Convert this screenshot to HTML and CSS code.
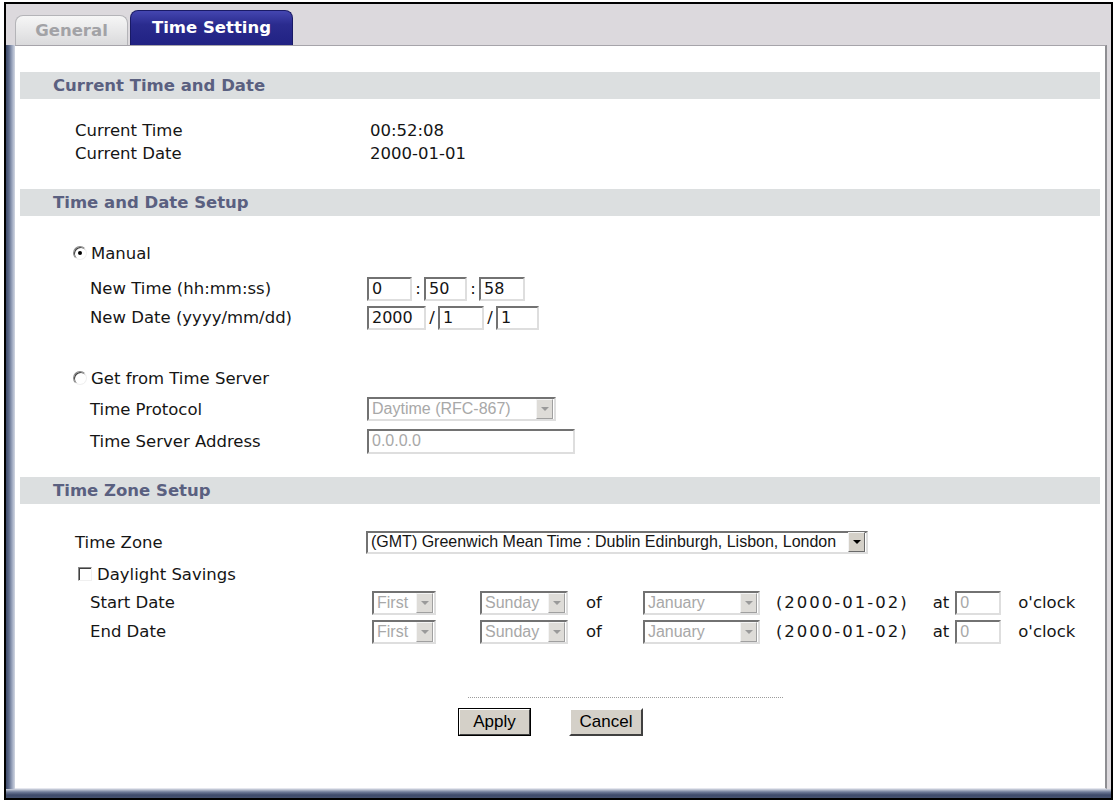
FILE: index.html
```html
<!DOCTYPE html>
<html lang="en">

<head>
    <meta charset="UTF-8">
    <title>Time Setting</title>
    <link rel="stylesheet" href="styles.css">
</head>

<body>
    <div class="window">
        <div class="tabs">
            <div class="tab">General</div>
            <div class="tab active">Time Setting</div>
        </div>
        <div class="frame">
            <div class="panel">

                <div class="sec-head">Current Time and Date</div>
                <div class="sec-body cur">
                    <div class="row"><span class="lbl">Current Time</span><span>00:52:08</span></div>
                    <div class="row"><span class="lbl">Current Date</span><span>2000-01-01</span></div>
                </div>

                <div class="sec-head">Time and Date Setup</div>
                <div class="sec-body setup">
                    <div class="row opt"><span class="radio on"></span><span>Manual</span></div>
                    <div class="row sub first-sub">
                        <span class="lbl">New Time (hh:mm:ss)</span>
                        <span class="txt w45">0</span><span class="sep">:</span>
                        <span class="txt w43">50</span><span class="sep">:</span>
                        <span class="txt w46">58</span>
                    </div>
                    <div class="row sub">
                        <span class="lbl">New Date (yyyy/mm/dd)</span>
                        <span class="txt w59">2000</span><span class="sep">/</span>
                        <span class="txt w46">1</span><span class="sep">/</span>
                        <span class="txt w43">1</span>
                    </div>
                    <div class="row opt server"><span class="radio"></span><span>Get from Time Server</span></div>
                    <div class="row sub tall">
                        <span class="lbl">Time Protocol</span>
                        <span class="sel off proto"><span class="val">Daytime (RFC-867)</span><span class="arr"></span></span>
                    </div>
                    <div class="row sub tall">
                        <span class="lbl">Time Server Address</span>
                        <span class="txt off addr">0.0.0.0</span>
                    </div>
                </div>

                <div class="sec-head">Time Zone Setup</div>
                <div class="sec-body zone">
                    <div class="row tz">
                        <span class="lbl">Time Zone</span>
                        <span class="sel gmt"><span class="val">(GMT) Greenwich Mean Time : Dublin Edinburgh, Lisbon, London</span><span class="arr"></span></span>
                    </div>
                    <div class="row dst"><span class="check"></span><span>Daylight Savings</span></div>
                    <div class="row day">
                        <span class="lbl">Start Date</span>
                        <span class="sel off s-week"><span class="val">First</span><span class="arr"></span></span>
                        <span class="sel off s-day"><span class="val">Sunday</span><span class="arr"></span></span>
                        <span class="word of">of</span>
                        <span class="sel off s-month"><span class="val">January</span><span class="arr"></span></span>
                        <span class="word stamp">(2000-01-02)</span>
                        <span class="word at">at</span>
                        <span class="txt off hour">0</span>
                        <span class="word">o'clock</span>
                    </div>
                    <div class="row day">
                        <span class="lbl">End Date</span>
                        <span class="sel off s-week"><span class="val">First</span><span class="arr"></span></span>
                        <span class="sel off s-day"><span class="val">Sunday</span><span class="arr"></span></span>
                        <span class="word of">of</span>
                        <span class="sel off s-month"><span class="val">January</span><span class="arr"></span></span>
                        <span class="word stamp">(2000-01-02)</span>
                        <span class="word at">at</span>
                        <span class="txt off hour">0</span>
                        <span class="word">o'clock</span>
                    </div>
                </div>

                <div class="footer">
                    <div class="dots"></div>
                    <div class="buttons">
                        <button class="btn default">Apply</button>
                        <button class="btn cancel">Cancel</button>
                    </div>
                </div>

            </div>
        </div>
    </div>
</body>

</html>
```

FILE: styles.css
```css
* {
    box-sizing: border-box;
}

body {
    margin: 0;
    background: #fff;
    font-family: "DejaVu Sans", Verdana, sans-serif;
    font-size: 16.5px;
    color: #151515;
}

.window {
    margin: 2px 2px 0 4px;
    width: 1109px;
    height: 798px;
    border: 2px solid #000;
    background: #dcd9dd;
    display: flex;
    flex-direction: column;
}

/* tabs */

.tabs {
    height: 41px;
    display: flex;
    align-items: flex-end;
    padding-left: 9px;
    gap: 2px;
}

.tab {
    width: 113px;
    height: 30px;
    padding-top: 5px;
    text-align: center;
    font-weight: bold;
    color: #a2a2a6;
    background: linear-gradient(#f6f6f6, #dadadc);
    border: 1px solid #b4b4b8;
    border-bottom: none;
    border-radius: 8px 8px 0 0;
}

.tab.active {
    width: 163px;
    height: 35px;
    padding-top: 7px;
    color: #fff;
    background: linear-gradient(#4446b0, #2a2b8e 40%, #212283);
    border-color: #191a66;
}

/* frame round the panel */

.frame {
    flex: 1;
    display: flex;
    padding: 0 0 9px 9px;
    background:
        linear-gradient(#d0d5e0, #6f7b98 3px, #3e4a6a 6px, #46526f) left bottom / 100% 9px no-repeat,
        linear-gradient(to right, #3e4a6a, #5e6b8a 3px, #9aa5bd 6px, #d2d7e2) left top / 9px 100% no-repeat,
        #dcd9dd;
}

.panel {
    flex: 1;
    margin-right: 4px;
    background: #fff;
    border-top: 1px solid #a6a4aa;
    border-right: 2px solid #8e8e92;
    border-bottom: 1px solid #e4e6ee;
    padding-top: 26px;
}

.sec-head {
    margin: 0 5px;
    height: 27px;
    line-height: 27px;
    padding-left: 33px;
    background: #dcdfe0;
    color: #5a6080;
    font-weight: bold;
}

.row {
    display: flex;
    align-items: center;
    height: 23px;
    white-space: nowrap;
}

/* current time */

.cur {
    padding: 20px 0 24px 60px;
}

.cur .lbl {
    width: 295px;
}

/* setup */

.setup {
    padding: 22px 0 20px 0;
}

.opt {
    height: 30px;
    padding-left: 58px;
}

.server {
    margin-top: 31px;
}

.sub {
    height: 29px;
    padding-left: 75px;
}

.sub .lbl {
    width: 277px;
}

.first-sub {
    margin-top: 6px;
}

.sub.tall {
    height: 32px;
}

.radio {
    position: relative;
    width: 14px;
    height: 14px;
    margin-right: 4px;
    border-radius: 50%;
    border: 1px solid;
    border-color: #8a8a8a #f0f0f0 #f0f0f0 #8a8a8a;
    box-shadow: inset 1px 1px 0 #404040;
    background: #fff;
}

.radio.on::after {
    content: "";
    position: absolute;
    left: 4px;
    top: 4px;
    width: 4px;
    height: 4px;
    border-radius: 50%;
    background: #000;
}

.txt {
    display: inline-block;
    height: 24px;
    line-height: 20px;
    padding-left: 3px;
    border: 2px solid;
    border-color: #727272 #dedede #dedede #727272;
    background: #fff;
    font-size: 16px;
}

.sep {
    width: 12px;
    text-align: center;
}

.w43 { width: 43px; }
.w45 { width: 45px; }
.w46 { width: 46px; }
.w59 { width: 59px; }

.txt.off {
    font-family: "Liberation Sans", Arial, sans-serif;
    color: #a8a8a8;
}

.addr {
    width: 208px;
    height: 25px;
}

/* fake drop-down lists */

.sel {
    display: inline-flex;
    align-items: center;
    justify-content: space-between;
    height: 24px;
    padding: 0 1px 0 3px;
    border: 2px solid;
    border-color: #727272 #dedede #dedede #727272;
    background: #fff;
    font-family: "Liberation Sans", Arial, sans-serif;
    font-size: 16px;
}

.sel.off {
    color: #a8a8a8;
}

.arr {
    position: relative;
    flex: none;
    width: 17px;
    height: 20px;
    background: #d4d0c8;
    border: 1px solid;
    border-color: #f4f4f4 #6a6a6a #6a6a6a #f4f4f4;
}

.arr::after {
    content: "";
    position: absolute;
    left: 4px;
    top: 7px;
    border-top: 4px solid #000;
    border-left: 4px solid transparent;
    border-right: 4px solid transparent;
}

.sel.off .arr {
    background: #dedcd8;
    border-color: #f4f4f4 #a0a0a0 #a0a0a0 #f4f4f4;
}

.sel.off .arr::after {
    border-top-color: #9a9a9a;
}

.proto {
    width: 189px;
}

/* time zone */

.zone {
    padding: 24px 0 0 0;
}

.tz {
    height: 28px;
    padding-left: 60px;
}

.tz .lbl {
    width: 291px;
}

.gmt {
    width: 502px;
    height: 23px;
}

.dst {
    height: 28px;
    margin-top: 4px;
    padding-left: 63px;
}

.check {
    width: 14px;
    height: 14px;
    margin-right: 5px;
    border: 1px solid;
    border-color: #8a8a8a #f0f0f0 #f0f0f0 #8a8a8a;
    box-shadow: inset 1px 1px 0 #404040;
}

.day {
    height: 29px;
    padding-left: 75px;
}

.day .lbl {
    width: 282px;
}

.s-week {
    width: 64px;
}

.s-day {
    width: 88px;
    margin-left: 44px;
}

.s-month {
    width: 117px;
}

.word.of {
    margin: 0 41px 0 18px;
}

.word.stamp {
    margin: 0 24px 0 16px;
    letter-spacing: 2px;
}

.word.at {
    margin-right: 6px;
}

.hour {
    width: 46px;
    margin-right: 17px;
}

/* buttons */

.footer {
    margin: 51px 0 0 443px;
    width: 340px;
}

.dots {
    margin-left: 10px;
    height: 1px;
    width: 315px;
    border-top: 1px dotted #9c9c9c;
}

.buttons {
    display: flex;
    gap: 38px;
    margin-top: 10px;
}

.btn {
    width: 73px;
    height: 28px;
    padding: 0;
    background: #d4d0c8;
    border: 2px solid;
    border-color: #fff #404040 #404040 #fff;
    font-family: "Liberation Sans", Arial, sans-serif;
    font-size: 17px;
    color: #000;
}

.btn.cancel {
    width: 74px;
}

.btn.default {
    outline: 1px solid #000;
    outline-offset: -1px;
}
```
